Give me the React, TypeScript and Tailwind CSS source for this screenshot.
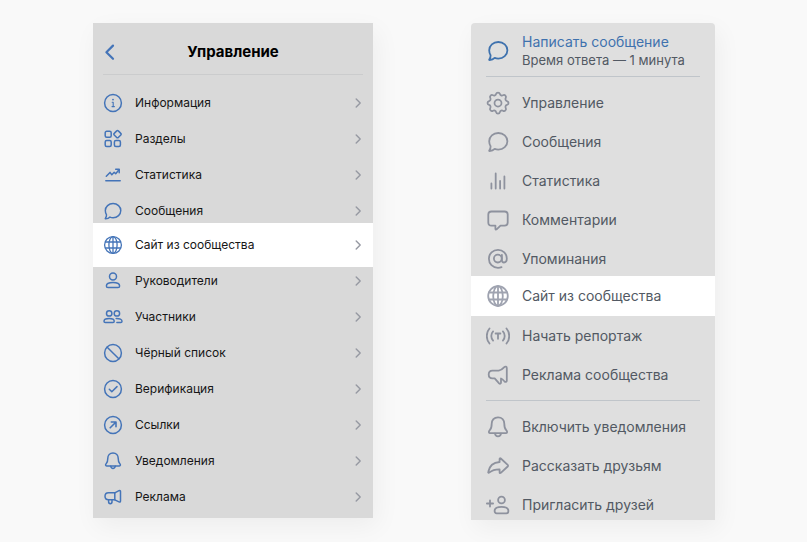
import type { ReactNode } from "react";
import { HiOutlineCog } from "react-icons/hi";

interface IconProps {
  children: ReactNode;
  className?: string;
}

// Mobile list icons, 20px grid
function MobileIcon({ children }: IconProps) {
  return (
    <svg
      aria-hidden="true"
      viewBox="0 0 20 20"
      className="size-5 shrink-0 text-[#4474b8]"
      fill="none"
      stroke="currentColor"
      strokeWidth="1.5"
      strokeLinecap="round"
      strokeLinejoin="round"
    >
      {children}
    </svg>
  );
}

// Desktop menu icons, 24px grid
function MenuIcon({ children, className = "text-[#8e929e]" }: IconProps) {
  return (
    <svg
      aria-hidden="true"
      viewBox="0 0 24 24"
      className={`size-6 shrink-0 ${className}`}
      fill="none"
      stroke="currentColor"
      strokeWidth="1.8"
      strokeLinecap="round"
      strokeLinejoin="round"
    >
      {children}
    </svg>
  );
}

const bubble =
  "M12.3 3C17.4 3 21.4 6.7 21.4 11.3S17.4 19.6 12.3 19.6C11 19.6 9.8 19.4 8.7 18.9C7.5 20.2 5.6 21 3.6 21C3.2 21 3 20.6 3.3 20.3C4.2 19.2 4.7 17.9 4.6 16.2C3.7 14.8 3.2 13.1 3.2 11.3C3.2 6.7 7.2 3 12.3 3Z";

const mobileItems: { label: string; icon: ReactNode; active?: boolean }[] = [
  {
    label: "Информация",
    icon: (
      <>
        <circle cx="10" cy="10" r="8.4" />
        <path d="M9.2 9.3H10.2V13.5M9 13.6H11.4" strokeWidth="1.1" />
        <circle cx="10" cy="6.6" r="0.9" fill="currentColor" stroke="none" />
      </>
    ),
  },
  {
    label: "Разделы",
    icon: (
      <>
        <rect x="2.2" y="2.3" width="6" height="6" rx="1.5" />
        <rect x="2.2" y="11.5" width="6" height="6" rx="1.5" />
        <rect x="11.4" y="11.5" width="6" height="6" rx="1.5" />
        <path d="M13.7 1.9a1.1 1.1 0 0 1 1.6 0l2.5 2.5a1.1 1.1 0 0 1 0 1.6l-2.5 2.5a1.1 1.1 0 0 1-1.6 0l-2.5-2.5a1.1 1.1 0 0 1 0-1.6z" />
      </>
    ),
  },
  {
    label: "Статистика",
    icon: (
      <>
        <path d="M3.3 11.2 7 7.4 8.8 9.8 11.2 7.3 12.7 8.7 16 4.7" />
        <path d="M12.7 4.3H16.2V7.8" />
        <path d="M2.8 15.8H17.2" />
      </>
    ),
  },
  {
    label: "Сообщения",
    icon: <path d={bubble} transform="translate(-0.4 0) scale(0.85)" strokeWidth="1.7" />,
  },
  {
    label: "Сайт из сообщества",
    active: true,
    icon: (
      <g strokeWidth="1.3">
        <circle cx="10" cy="10" r="8.4" />
        <ellipse cx="10" cy="10" rx="4.1" ry="8.4" />
        <path d="M10 1.6V18.4M2.4 7H17.6M2.4 13H17.6" />
      </g>
    ),
  },
  {
    label: "Руководители",
    icon: (
      <>
        <circle cx="10" cy="5.6" r="3.5" />
        <path d="M3.4 14.9C3.4 12.7 6.5 11.5 10 11.5S16.6 12.7 16.6 14.9C16.6 16.1 15.9 16.6 15 16.6H5C4.1 16.6 3.4 16.1 3.4 14.9Z" />
      </>
    ),
  },
  {
    label: "Участники",
    icon: (
      <>
        <circle cx="6.2" cy="6.4" r="2.7" />
        <circle cx="13.9" cy="6.4" r="2.7" />
        <path d="M1 14.2C1 12.4 3.3 11.5 6.2 11.5S11.2 12.4 11.2 14.2C11.2 15.2 10.7 15.6 10 15.6H2.3C1.5 15.6 1 15.2 1 14.2Z" />
        <path d="M13.2 11.5C16.7 11.4 19 12.4 19 14.2C19 15.2 18.5 15.6 17.8 15.6H13.9" />
      </>
    ),
  },
  {
    label: "Чёрный список",
    icon: (
      <>
        <circle cx="10" cy="10" r="8.4" />
        <path d="M4.2 4.2 15.8 15.8" />
      </>
    ),
  },
  {
    label: "Верификация",
    icon: (
      <>
        <circle cx="10" cy="10" r="8.4" />
        <path d="M6.3 10.3 8.8 12.8 14 7.6" />
      </>
    ),
  },
  {
    label: "Ссылки",
    icon: (
      <>
        <circle cx="10" cy="10" r="8.4" />
        <path d="M7.2 12.8 12.8 7.2M8.3 7H13V11.7" strokeWidth="1.6" />
      </>
    ),
  },
  {
    label: "Уведомления",
    icon: (
      <>
        <path d="M10 1.9C13.2 1.9 15.2 4.2 15.2 7.3C15.2 10.3 15.6 11.3 16.7 12.5C17.9 13.8 17.5 14.9 16.3 14.9H3.7C2.5 14.9 2.1 13.8 3.3 12.5C4.4 11.3 4.8 10.3 4.8 7.3C4.8 4.2 6.8 1.9 10 1.9Z" />
        <path d="M7.7 15.2C8 16.7 8.8 17.4 10 17.4S12 16.7 12.3 15.2" />
      </>
    ),
  },
  {
    label: "Реклама",
    icon: (
      <>
        <path d="M11.8 5.8H5.5C3.4 5.8 2 7.3 2 9.3S3.4 12.8 5.5 12.8H11.8Z" />
        <path d="M11.8 5.8 16 3.7C16.9 3.3 17.5 3.6 17.5 4.5V14.1C17.5 15 16.9 15.3 16 14.9L11.8 12.8" />
        <path d="M5.6 13V14.8C5.6 16 6.3 16.7 7.3 16.7S9 16 9 14.8V13" />
      </>
    ),
  },
];

const menuItems: { label: string; icon: ReactNode; active?: boolean }[] = [
  {
    label: "Управление",
    icon: (
      <HiOutlineCog
        aria-hidden="true"
        className="-mx-0.5 size-7 shrink-0 text-[#8e929e] [&_path]:stroke-[1.5]"
      />
    ),
  },
  {
    label: "Сообщения",
    icon: (
      <MenuIcon>
        <path d={bubble} />
      </MenuIcon>
    ),
  },
  {
    label: "Статистика",
    icon: (
      <MenuIcon>
        <path d="M5.4 14.5V19.5M9.7 4.5V19.5M14.1 12V19.5M18.4 7.5V19.5" />
      </MenuIcon>
    ),
  },
  {
    label: "Комментарии",
    icon: (
      <MenuIcon>
        <path d="M5.5 3.5H18.5C20.6 3.5 21.7 4.6 21.7 6.5V14.5C21.7 16.5 20.6 17.6 18.5 17.6H14.5L10.6 21.3C10 21.8 9.4 21.6 9.4 20.8V17.6H5.5C3.4 17.6 2.3 16.5 2.3 14.5V6.5C2.3 4.6 3.4 3.5 5.5 3.5Z" />
      </MenuIcon>
    ),
  },
  {
    label: "Упоминания",
    icon: (
      <MenuIcon>
        <circle cx="11.8" cy="11.6" r="3.9" />
        <path d="M15.9 7.8V13C15.9 14.6 16.7 15.5 18 15.5C19.7 15.5 20.8 14 20.8 11.6C20.8 6.5 17 2.8 12 2.8S2.9 6.6 2.9 11.7S6.7 20.8 12 20.8C13.4 20.8 14.5 20.6 15.5 20.2" />
      </MenuIcon>
    ),
  },
  {
    label: "Сайт из сообщества",
    active: true,
    icon: (
      <MenuIcon className="text-[#9fa3b0]">
        <circle cx="12" cy="12" r="9.8" />
        <ellipse cx="12" cy="12" rx="4.8" ry="9.8" />
        <path d="M12 2.2V21.8M3 8.5H21M3 15.5H21" />
      </MenuIcon>
    ),
  },
  {
    label: "Начать репортаж",
    icon: (
      <MenuIcon>
        <path d="M3.5 4.5C-0.1 8.6-0.1 15.4 3.5 19.5M20.5 4.5C24.1 8.6 24.1 15.4 20.5 19.5" />
        <path d="M7.1 7.4C4.7 10 4.7 14 7.1 16.6M16.9 7.4C19.3 10 19.3 14 16.9 16.6" />
        <path d="M9.6 9.5H14.4M12 9.5V14.8" />
      </MenuIcon>
    ),
  },
  {
    label: "Реклама сообщества",
    icon: (
      <MenuIcon>
        <path d="M12.7 7.7C15 7.3 16.7 6 18.3 4.2C19.3 3.2 20.8 3.5 20.8 5V17.5C20.8 19 19.5 19.4 18.4 18.3C17.3 17.1 16.3 16 15 15.5V19.6C15 20.9 13.9 21.1 13.1 20.3L8.7 15.3H6.5C4.2 15.3 2.7 13.7 2.7 11.5S4.2 7.7 6.5 7.7Z" />
      </MenuIcon>
    ),
  },
];

const actionItems: { label: string; icon: ReactNode }[] = [
  {
    label: "Включить уведомления",
    icon: (
      <MenuIcon>
        <path d="M12 2.3C15.9 2.3 18.3 5 18.3 8.8C18.3 12.4 18.8 13.8 20.2 15.2C21.8 16.9 21.2 18.2 19.7 18.2H4.3C2.8 18.2 2.2 16.9 3.8 15.2C5.2 13.8 5.7 12.4 5.7 8.8C5.7 5 8.1 2.3 12 2.3Z" />
        <path d="M9 18.7C9.3 20.5 10.5 21.4 12 21.4S14.7 20.5 15 18.7" />
      </MenuIcon>
    ),
  },
  {
    label: "Рассказать друзьям",
    icon: (
      <MenuIcon>
        <path d="M13.6 4.9C13.6 4.2 14.2 4 14.8 4.5L21.7 10.9C22.2 11.4 22.2 12 21.7 12.5L14.8 18.9C14.2 19.4 13.6 19.2 13.6 18.5V15.4C9 15.3 6 16.4 3.2 18.6C2.6 19.1 2 18.8 2.2 18C3.3 12.5 7.1 8.4 13.6 8Z" />
      </MenuIcon>
    ),
  },
  {
    label: "Пригласить друзей",
    icon: (
      <MenuIcon>
        <circle cx="15.5" cy="7" r="3.4" />
        <path d="M8.6 18C8.6 15.2 11.7 13.9 15.5 13.9S22.4 15.2 22.4 18C22.4 19.5 21.6 20.3 20.4 20.3H10.6C9.4 20.3 8.6 19.5 8.6 18Z" />
        <path d="M0.9 10.5H7.1M4 7.4V13.6" />
      </MenuIcon>
    ),
  },
];

function Chevron() {
  return (
    <svg
      aria-hidden="true"
      viewBox="0 0 10 10"
      className="size-2.5 shrink-0 text-[#9699a2]"
      fill="none"
      stroke="currentColor"
      strokeWidth="1.4"
      strokeLinecap="round"
      strokeLinejoin="round"
    >
      <path d="M3.2 1 7.2 5 3.2 9" />
    </svg>
  );
}

function MobilePanel() {
  return (
    <section className="w-[280px] bg-[#d9d9d9] pb-[3px] text-black shadow-[4px_8px_24px_rgba(0,0,0,0.05)]">
      <header className="mx-2.5 grid h-[52px] grid-cols-[20px_1fr_20px] items-center border-b border-[#cbcccd] pt-1.5">
        <button type="button" aria-label="Назад" className="text-[#4474b8]">
          <svg
            aria-hidden="true"
            viewBox="0 0 20 20"
            className="size-5"
            fill="none"
            stroke="currentColor"
            strokeWidth="2.2"
            strokeLinecap="round"
            strokeLinejoin="round"
          >
            <path d="M10 3.6 3.4 10.2 10 16.8" />
          </svg>
        </button>
        <h1 className="text-center text-[15px] leading-5 font-bold">Управление</h1>
      </header>
      <ul className="mt-2.5">
        {mobileItems.map(({ label, icon, active }) => (
          <li key={label} className={active ? "-mt-1.5 -mb-1 bg-white" : ""}>
            <a
              href="#"
              className={`flex items-center gap-3 px-2.5 text-xs text-[#161616] ${active ? "h-11" : "h-9"}`}
            >
              <MobileIcon>{icon}</MobileIcon>
              <span className="flex-1">{label}</span>
              <Chevron />
            </a>
          </li>
        ))}
      </ul>
    </section>
  );
}

function MenuRow({
  label,
  icon,
  active,
}: {
  label: string;
  icon: ReactNode;
  active?: boolean;
}) {
  return (
    <li className={active ? "-mt-0.5 bg-white" : ""}>
      <a
        href="#"
        className={`flex items-center gap-3 px-[15px] ${active ? "h-10" : "h-[39px]"}`}
      >
        {icon}
        <span>{label}</span>
      </a>
    </li>
  );
}

function DesktopPanel() {
  return (
    <section className="w-[244px] overflow-hidden rounded-t-sm bg-[#dfdfdf] text-sm text-[#525963] shadow-[4px_8px_24px_rgba(0,0,0,0.05)]">
      <a href="#" className="flex items-center gap-3 px-[15px] pt-2.5 pb-[7px]">
        <MenuIcon className="text-[#3f72ae]">
          <path d={bubble} />
        </MenuIcon>
        <span className="flex flex-col">
          <span className="text-sm leading-[18px] text-[#3f72ae]">Написать сообщение</span>
          <span className="text-[13px] leading-[18px]">Время ответа — 1 минута</span>
        </span>
      </a>
      <hr className="mx-[15px] border-[#c0c5ca]" />
      <ul className="mt-1.5">
        {menuItems.map((item) => (
          <MenuRow key={item.label} {...item} />
        ))}
      </ul>
      <hr className="mx-[15px] my-1.5 border-[#c0c5ca]" />
      <ul className="-mb-1">
        {actionItems.map((item) => (
          <MenuRow key={item.label} {...item} />
        ))}
      </ul>
    </section>
  );
}

export default function App() {
  return (
    <main className="flex min-h-screen items-start justify-center gap-[98px] bg-[#f9f9f9] pt-[23px] pl-px font-['Inter','Liberation_Sans',sans-serif]">
      <MobilePanel />
      <DesktopPanel />
    </main>
  );
}
